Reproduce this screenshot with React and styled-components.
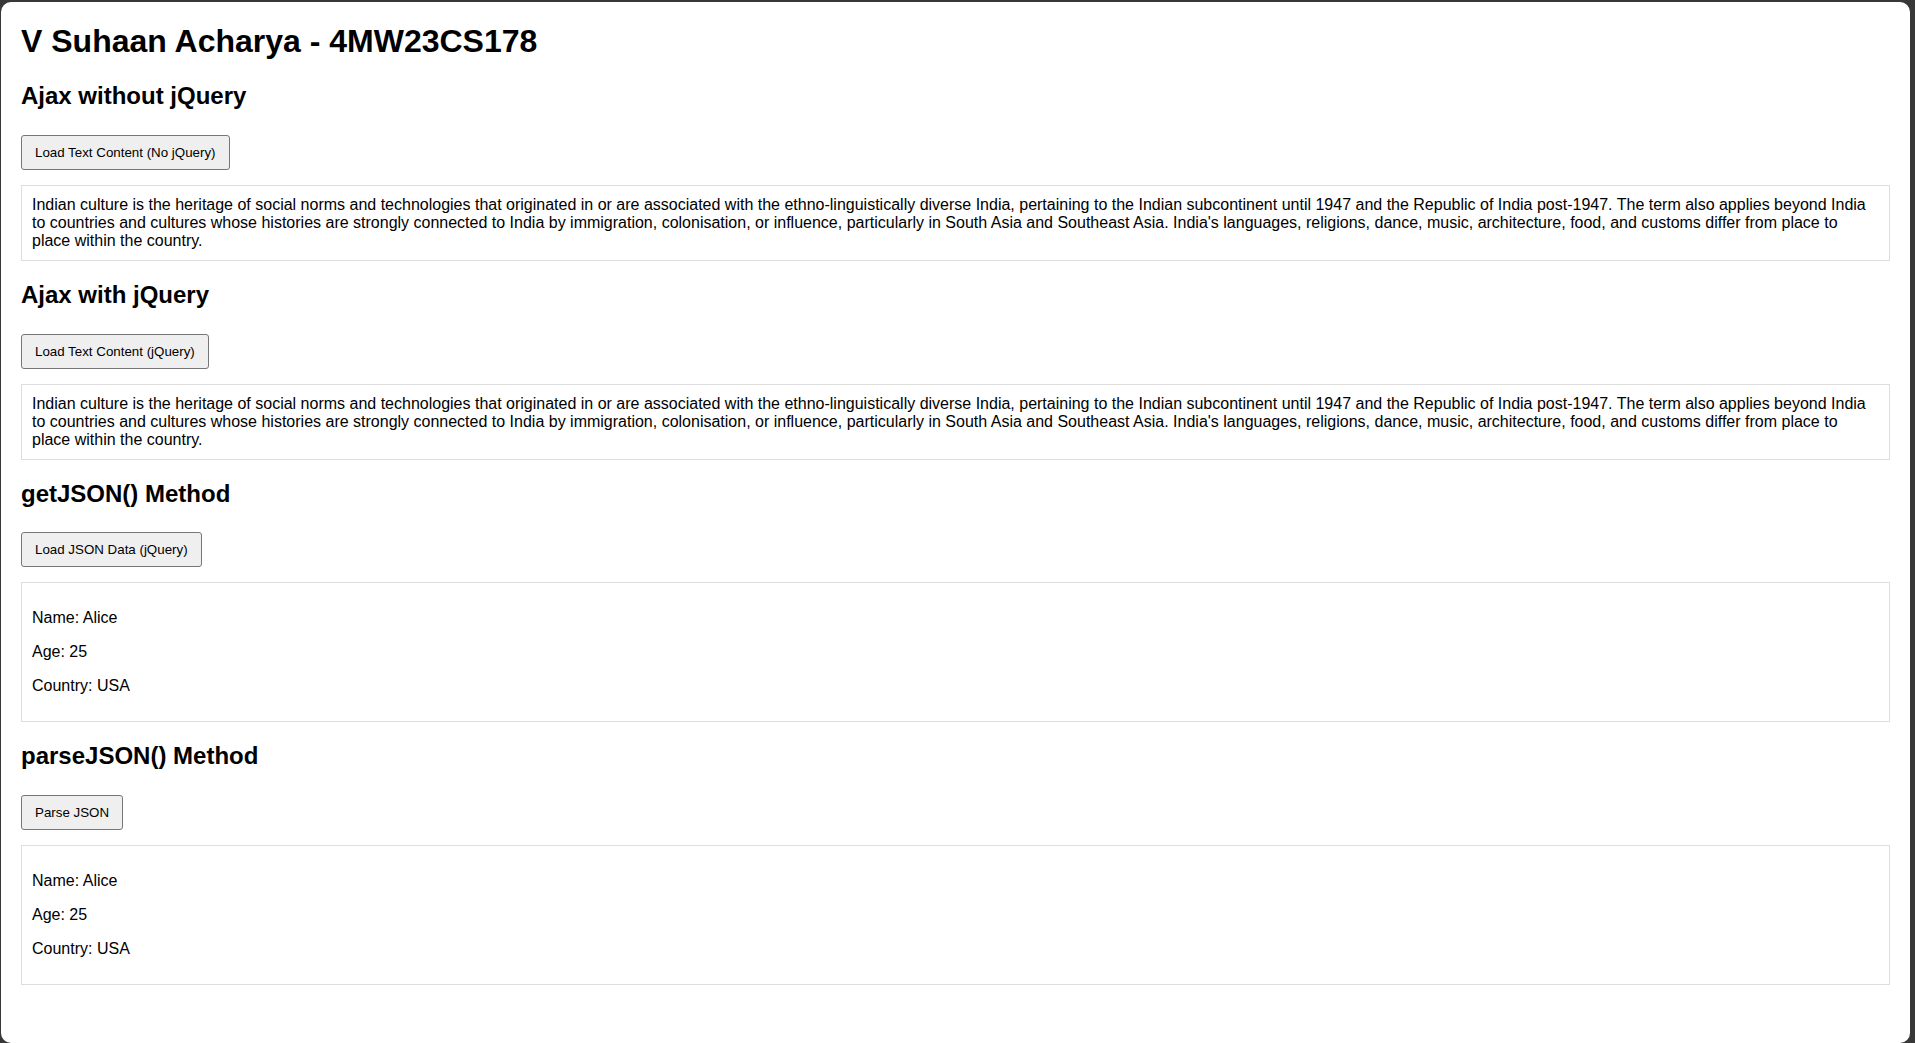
import React from "react";
import styled, { createGlobalStyle } from "styled-components";

const GlobalStyle = createGlobalStyle`
  html, body {
    margin: 0;
    padding: 0;
    height: 100%;
  }
  body {
    background: #383838;
    font-family: "Liberation Sans", Arial, sans-serif;
    color: #000;
  }
`;

const Frame = styled.div`
  display: flow-root;
  height: 100vh;
  overflow: hidden;
`;

const Window = styled.main`
  display: flow-root;
  margin: 2px 5px 0 1px;
  height: calc(100vh - 2px);
  padding: 0 20px;
  box-sizing: border-box;
  background: #fff;
  border-radius: 10px;
  overflow: hidden;
`;

const Title = styled.h1`
  font-size: 32px;
  font-weight: 700;
  margin: 21.44px 0;
`;

const SectionTitle = styled.h2`
  font-size: 24px;
  font-weight: 700;
  margin: 19.92px 0;
`;

const ActionButton = styled.button`
  font: 13.33px "Liberation Sans", Arial, sans-serif;
  color: #000;
  background: #efefef;
  border: 1px solid #767676;
  border-radius: 3px;
  padding: 9px 13px;
  margin: 5px 0;
  cursor: pointer;
  &:hover { background: #e5e5e5; }
`;

const OutputBox = styled.div`
  margin-top: 10px;
  border: 1px solid #ddd;
  padding: 10px;
  font-size: 16px;
`;

const Field = styled.p`
  margin: 16px 0;
`;

const cultureText =
  "Indian culture is the heritage of social norms and technologies that originated in or are associated with the ethno-linguistically diverse India, pertaining to the Indian subcontinent until 1947 and the Republic of India post-1947. The term also applies beyond India to countries and cultures whose histories are strongly connected to India by immigration, colonisation, or influence, particularly in South Asia and Southeast Asia. India's languages, religions, dance, music, architecture, food, and customs differ from place to place within the country.";

const person = { Name: "Alice", Age: 25, Country: "USA" };

const sections = [
  { title: "Ajax without jQuery", button: "Load Text Content (No jQuery)", text: cultureText },
  { title: "Ajax with jQuery", button: "Load Text Content (jQuery)", text: cultureText },
  { title: "getJSON() Method", button: "Load JSON Data (jQuery)", data: person },
  { title: "parseJSON() Method", button: "Parse JSON", data: person },
];

const App = () => (
  <>
    <GlobalStyle />
    <Frame>
      <Window>
        <Title>V Suhaan Acharya - 4MW23CS178</Title>
        {sections.map(s => (
          <section key={s.title}>
            <SectionTitle>{s.title}</SectionTitle>
            <ActionButton type="button">{s.button}</ActionButton>
            {s.data ? (
              <OutputBox>
                {Object.entries(s.data).map(([k, v]) => (
                  <Field key={k}>{k}: {v}</Field>
                ))}
              </OutputBox>
            ) : (
              <OutputBox>{s.text}</OutputBox>
            )}
          </section>
        ))}
      </Window>
    </Frame>
  </>
);

export default App;
